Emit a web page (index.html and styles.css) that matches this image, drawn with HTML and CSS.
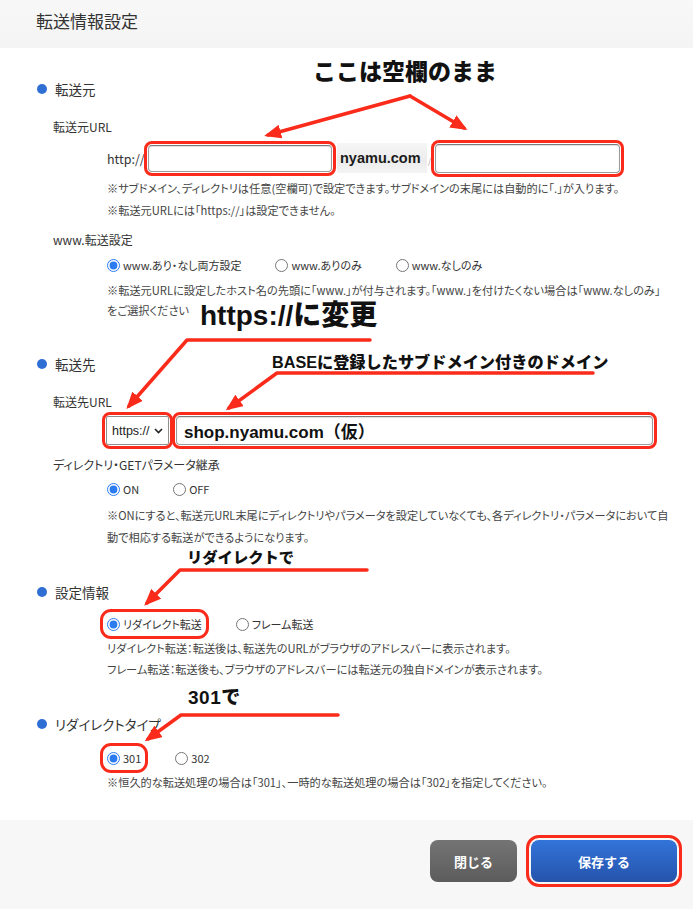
FILE: index.html
```html
<!DOCTYPE html>
<html lang="ja">
<head>
    <meta charset="UTF-8">
    <meta name="viewport" content="width=device-width, initial-scale=1.0">
    <title>転送情報設定</title>
    <link rel="stylesheet" href="styles.css">
</head>
<body>
<div class="page">
    <header class="dialog-head">
        <h1>転送情報設定</h1>
    </header>

    <form class="dialog-body">
        <section class="group">
            <h2>転送元</h2>
            <div class="field">
                <div class="label">転送元URL</div>
                <div class="ctl url-row">
                    <span class="scheme">http://</span>
                    <input type="text" class="txt txt-sub mark">
                    <span class="domain">nyamu.com</span>
                    <span class="slash">/</span>
                    <input type="text" class="txt txt-dir mark">
                </div>
                <p class="note first">※サブドメイン、ディレクトリは任意(空欄可)で設定できます。サブドメインの末尾には自動的に「.」が入ります。</p>
                <p class="note">※転送元URLには「https://」は設定できません。</p>
            </div>
            <div class="field">
                <div class="label">www.転送設定</div>
                <div class="ctl radios">
                    <label><input type="radio" name="www" checked>www.あり・なし両方設定</label>
                    <label><input type="radio" name="www">www.ありのみ</label>
                    <label><input type="radio" name="www">www.なしのみ</label>
                </div>
                <p class="note first tight">※転送元URLに設定したホスト名の先頭に「www.」が付与されます。「www.」を付けたくない場合は「www.なしのみ」<span>をご選択ください</span></p>
            </div>
        </section>

        <section class="group">
            <h2>転送先</h2>
            <div class="field">
                <div class="label">転送先URL</div>
                <div class="ctl url-row to-row">
                    <span class="select-wrap mark">
                        <select class="scheme-select">
                            <option>https://</option>
                            <option>http://</option>
                        </select>
                        <svg class="chevron" width="9" height="6" viewBox="0 0 9 6"><path d="M1 1l3.5 3.5L8 1" fill="none" stroke="#222" stroke-width="1.6"/></svg>
                    </span>
                    <input type="text" class="txt txt-to mark" value="shop.nyamu.com（仮）">
                </div>
            </div>
            <div class="field">
                <div class="label label-near">ディレクトリ・GETパラメータ継承</div>
                <div class="ctl radios">
                    <label><input type="radio" name="inherit" checked>ON</label>
                    <label><input type="radio" name="inherit">OFF</label>
                </div>
                <p class="note first">※ONにすると、転送元URL末尾にディレクトリやパラメータを設定していなくても、各ディレクトリ・パラメータにおいて自動で相応する転送ができるようになります。</p>
            </div>
        </section>

        <section class="group">
            <h2>設定情報</h2>
            <div class="field">
                <div class="ctl radios radios-top">
                    <label class="mark"><input type="radio" name="mode" checked>リダイレクト転送</label>
                    <label><input type="radio" name="mode">フレーム転送</label>
                </div>
                <p class="note first mid">リダイレクト転送：転送後は、転送先のURLがブラウザのアドレスバーに表示されます。</p>
                <p class="note mid">フレーム転送：転送後も、ブラウザのアドレスバーには転送元の独自ドメインが表示されます。</p>
            </div>
        </section>

        <section class="group">
            <h2>リダイレクトタイプ</h2>
            <div class="field">
                <div class="ctl radios radios-top">
                    <label class="mark"><input type="radio" name="code" checked>301</label>
                    <label><input type="radio" name="code">302</label>
                </div>
                <p class="note last">※恒久的な転送処理の場合は「301」、一時的な転送処理の場合は「302」を指定してください。</p>
            </div>
        </section>
    </form>

    <footer class="dialog-foot">
        <button type="button" class="btn btn-close">閉じる</button>
        <button type="button" class="btn btn-save mark">保存する</button>
    </footer>

    <!-- annotations drawn over the screen -->
    <svg class="arrows" width="693" height="909" viewBox="0 0 693 909">
        <defs>
            <marker id="head" markerUnits="userSpaceOnUse" markerWidth="17" markerHeight="14" refX="13" refY="7" orient="auto">
                <path d="M0 0L17 7L0 14z" fill="#fa2b1a"/>
            </marker>
        </defs>
        <g fill="none" stroke="#fa2b1a" stroke-width="3.5" stroke-linejoin="round" stroke-linecap="round" marker-end="url(#head)">
            <path d="M410 96L268 135"/>
            <path d="M410 96L464 128"/>
            <path d="M370 340H187L129 406"/>
            <path d="M593 373H277L229 408"/>
            <path d="M367 570H180L147 603"/>
            <path d="M338 715H181L148 739"/>
        </g>
    </svg>
    <div class="callout callout-empty">ここは空欄のまま</div>
    <div class="callout callout-https">https://に変更</div>
    <div class="callout callout-base">BASEに登録したサブドメイン付きのドメイン</div>
    <div class="callout callout-redirect">リダイレクトで</div>
    <div class="callout callout-301">301で</div>
</div>
</body>
</html>
```

FILE: styles.css
```css
* {
    box-sizing: border-box;
}

body {
    margin: 0;
    background: #fff;
    font-family: "Noto Sans CJK JP", "Liberation Sans", sans-serif;
    color: #333;
}

.page {
    position: relative;
    width: 693px;
    height: 909px;
    overflow: hidden;
}

/* header / footer bands */
.dialog-head {
    height: 48px;
    padding: 10px 0 0 36px;
    background: linear-gradient(#f8f8f8, #f4f4f4);
}

.dialog-head h1 {
    margin: 0;
    font-size: 17px;
    line-height: 22px;
    font-weight: 400;
    color: #333;
    font-feature-settings: "palt";
}

.dialog-foot {
    height: 91px;
    padding: 20px 16px 0 0;
    background: #f7f7f7;
    display: flex;
    justify-content: flex-end;
    gap: 14px;
}

/* body */
.dialog-body {
    margin: 0;
    padding: 31px 0 27px 37px;
}

.group + .group {
    margin-top: 34px;
}

.group h2 {
    display: flex;
    align-items: center;
    gap: 8px;
    margin: 0;
    font-size: 13.5px;
    line-height: 20px;
    font-weight: 400;
    color: #333;
    font-feature-settings: "palt";
}

.group h2::before {
    content: "";
    width: 10px;
    height: 10px;
    border-radius: 50%;
    background: #2f6fd3;
}

.field {
    padding-left: 16px;
}

.label {
    margin-top: 19px;
    font-size: 12px;
    line-height: 18px;
    color: #333;
    font-feature-settings: "palt";
}

.field + .field .label {
    margin-top: 10px;
}

.field + .field .label-near {
    margin-top: 11px;
}

.ctl {
    margin-left: 54px;
}

.note {
    margin: 0 0 0 54px;
    width: 563px;
    font-size: 11.2px;
    line-height: 22px;
    color: #444;
    font-feature-settings: "palt";
}

.note.first {
    margin-top: 5px;
}

.note.tight {
    line-height: 20px;
}

.note.mid {
    line-height: 21px;
}

.note.first.mid {
    margin-top: 4px;
}

.note.last {
    margin-top: 3px;
}

/* url rows */
.url-row {
    display: flex;
    align-items: center;
    margin-top: 8px;
    height: 28px;
}

.scheme {
    width: 41px;
    flex: none;
    font-size: 12.5px;
    color: #333;
}

.txt {
    height: 27px;
    border: 1px solid #9a9a9a;
    border-top-color: #7a7a7a;
    border-radius: 2px;
    background: #fff;
    box-shadow: inset 0 1px 1px rgba(0, 0, 0, 0.12);
    padding: 0 7px;
    font-family: "Liberation Sans", "Noto Sans CJK JP", sans-serif;
}

.txt-sub {
    width: 184px;
}

.txt-dir {
    width: 185px;
    height: 29px;
}

.domain {
    margin-left: 5px;
    width: 90px;
    height: 30px;
    line-height: 30px;
    padding-left: 3px;
    background: linear-gradient(#f6f6f6, #ececec 60%, #f4f4f4);
    font-family: "Liberation Sans", sans-serif;
    font-weight: 700;
    font-size: 14.5px;
    color: #1b1b1b;
}

.slash {
    align-self: flex-end;
    margin: 0 4px 6px 1px;
    font-size: 8px;
    color: #999;
}

.to-row {
    margin-top: 5px;
    height: 29px;
    margin-left: 53px;
    gap: 7px;
}

.select-wrap {
    position: relative;
    display: block;
    border-radius: 3px;
}

.scheme-select {
    display: block;
    width: 63px;
    height: 29px;
    appearance: none;
    border: 1px solid #8e8e8e;
    border-radius: 2px;
    background: #fff;
    padding: 0 0 0 5px;
    font-family: "Liberation Sans", sans-serif;
    font-size: 12.5px;
    color: #222;
}

.chevron {
    position: absolute;
    right: 6px;
    top: 12px;
    pointer-events: none;
}

.txt-to {
    width: 477px;
    height: 29px;
    font-weight: 700;
    font-size: 17px;
    color: #111;
}

/* radios */
.radios {
    display: flex;
    gap: 34px;
    margin-top: 6px;
    height: 20px;
    align-items: center;
}

.field .label-near + .radios {
    margin-top: 5px;
}

.radios-top {
    margin-top: 12px;
}

.group:last-child .radios-top {
    margin-top: 14px;
}

.radios label {
    display: flex;
    align-items: center;
    gap: 3px;
    font-size: 11px;
    color: #333;
    font-feature-settings: "palt";
    border-radius: 4px;
}

.radios input {
    margin: 0;
    width: 13px;
    height: 13px;
    accent-color: #2a7cf0;
}

/* red highlight of the annotation */
.mark {
    outline: 3px solid #fa2b1a;
    outline-offset: 1px;
    border-radius: 4px;
}

.radios label.mark {
    outline-offset: 4px;
}

/* buttons */
.btn {
    height: 42px;
    border: none;
    border-radius: 8px;
    color: #fff;
    font-family: "Noto Sans CJK JP", sans-serif;
    font-weight: 700;
    font-size: 13px;
    cursor: pointer;
}

.btn-close {
    width: 87px;
    background: linear-gradient(#747474, #5c5c5c);
}

.btn-save {
    width: 146px;
    background: linear-gradient(#3374d9, #2553ab);
    outline-offset: 2px;
    border-radius: 8px;
}

/* annotations */
.arrows {
    position: absolute;
    left: 0;
    top: 0;
    pointer-events: none;
}

.callout {
    position: absolute;
    font-family: "Liberation Sans", "Noto Sans CJK JP", sans-serif;
    font-weight: 900;
    color: #111;
    white-space: nowrap;
    line-height: 1;
}

.callout-empty {
    left: 313px;
    top: 61px;
    font-size: 23px;
}

.callout-https {
    left: 200px;
    top: 302px;
    font-size: 28px;
}

.callout-base {
    left: 272px;
    top: 354px;
    font-size: 16.2px;
}

.callout-redirect {
    left: 187px;
    top: 550px;
    font-size: 15.3px;
}

.callout-301 {
    left: 188px;
    top: 688px;
    font-size: 19px;
    letter-spacing: 0.5px;
}
```
